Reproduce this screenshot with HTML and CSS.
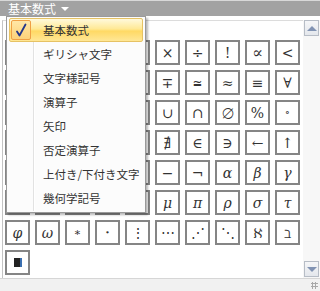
FILE: index.html
```html
<!DOCTYPE html>
<html lang="ja">
<head>
<meta charset="utf-8">
<link rel="stylesheet" href="styles.css">
</head>
<body>
<div class="panel">
  <div class="header"><span class="title">基本数式</span><span class="caret"></span></div>
  <div class="wrap">
    <div class="gallery">
      <div class="grid">
        <div class="cell"></div><div class="cell"></div><div class="cell"></div><div class="cell"></div><div class="cell"></div><div class="cell">×</div><div class="cell">÷</div><div class="cell">!</div><div class="cell lg">∝</div><div class="cell">&lt;</div>
        <div class="cell"></div><div class="cell"></div><div class="cell"></div><div class="cell"></div><div class="cell"></div><div class="cell">∓</div><div class="cell">≅</div><div class="cell">≈</div><div class="cell">≡</div><div class="cell">∀</div>
        <div class="cell"></div><div class="cell"></div><div class="cell"></div><div class="cell"></div><div class="cell"></div><div class="cell">∪</div><div class="cell">∩</div><div class="cell">∅</div><div class="cell">%</div><div class="cell sm">∘</div>
        <div class="cell"></div><div class="cell"></div><div class="cell"></div><div class="cell"></div><div class="cell"></div><div class="cell">∄</div><div class="cell">∈</div><div class="cell">∋</div><div class="cell">←</div><div class="cell">↑</div>
        <div class="cell"></div><div class="cell"></div><div class="cell"></div><div class="cell"></div><div class="cell"></div><div class="cell">−</div><div class="cell">¬</div><div class="cell it">α</div><div class="cell it">β</div><div class="cell it">γ</div>
        <div class="cell"></div><div class="cell"></div><div class="cell"></div><div class="cell"></div><div class="cell"></div><div class="cell it">μ</div><div class="cell it">π</div><div class="cell it">ρ</div><div class="cell it">σ</div><div class="cell it">τ</div>
        <div class="cell it">φ</div><div class="cell it">ω</div><div class="cell sm">∗</div><div class="cell xs">∙</div><div class="cell">⋮</div><div class="cell">⋯</div><div class="cell">⋰</div><div class="cell">⋱</div><div class="cell">ℵ</div><div class="cell">ℶ</div>
        <div class="cell"><span class="qed"></span></div>
      </div>
    </div>
    <div class="scroll">
      <div class="sbtn"><span class="up"></span></div>
      <div class="track"></div>
      <div class="sbtn"><span class="down"></span></div>
    </div>
  </div>
  <div class="footer"><span class="grip"></span></div>

  <div class="menu">
    <div class="sep"></div>
    <div class="item active">
      <span class="check"><svg width="12" height="14" viewBox="0 0 12 14"><path d="M2 8.5 L4.5 12.5 L10.5 1.5" fill="none" stroke="#23378a" stroke-width="1.8" stroke-linejoin="round" stroke-linecap="round"/></svg></span>
      <span class="label">基本数式</span>
    </div>
    <div class="item"><span class="label">ギリシャ文字</span></div>
    <div class="item"><span class="label">文字様記号</span></div>
    <div class="item"><span class="label">演算子</span></div>
    <div class="item"><span class="label">矢印</span></div>
    <div class="item"><span class="label">否定演算子</span></div>
    <div class="item"><span class="label">上付き/下付き文字</span></div>
    <div class="item"><span class="label">幾何学記号</span></div>
  </div>
</div>
</body>
</html>
```
FILE: styles.css
```css
* { box-sizing: border-box; }
html, body { margin: 0; padding: 0; }
body {
  width: 320px;
  height: 291px;
  background: #fff;
  font-family: "Noto Sans CJK JP", "Noto Sans", sans-serif;
  overflow: hidden;
}
.panel {
  position: relative;
  width: 320px;
  height: 291px;
  display: flex;
  flex-direction: column;
}
.header {
  height: 16px;
  background: #a2a2a2;
  border-top: 1px solid #d8d8d8;
  color: #fff;
  font-size: 12px;
  line-height: 14px;
  padding-left: 8px;
  display: flex;
  align-items: center;
  gap: 5px;
}
.caret {
  width: 0;
  height: 0;
  border-left: 4px solid transparent;
  border-right: 4px solid transparent;
  border-top: 4px solid #fff;
  margin-top: 1px;
}
.wrap {
  margin-top: 4px;
  display: flex;
  height: 258px;
}
.gallery {
  flex: 1;
  margin-left: 2px;
  border-top: 1px solid #dcdcdc;
  border-left: 1px solid #c4c4c4;
  padding: 19px 0 0 2px;
}
.grid {
  display: grid;
  grid-template-columns: repeat(10, 25px);
  grid-auto-rows: 25px;
  gap: 5px;
}
.cell {
  border: 2px solid #858585;
  background: #fff;
  display: flex;
  align-items: center;
  justify-content: center;
  font-family: "DejaVu Serif", "Liberation Serif", serif;
  font-size: 14px;
  color: #333;
  line-height: 1;
}
.cell.it { font-style: italic; }
.cell.sm { font-size: 11px; }
.cell.xs { font-size: 8px; }
.cell.lg { font-size: 16px; }
.qed {
  width: 8px;
  height: 9px;
  background: #222;
  border-right: 2px solid #3a6fb0;
}
.scroll {
  width: 17px;
  display: flex;
  flex-direction: column;
  background: #f7f7f7;
  padding: 0 1px 1px 1px;
}
.sbtn {
  height: 16px;
  border: 1px solid #b7bdc6;
  background: linear-gradient(#f5f6f8, #e4e7ec);
  display: flex;
  align-items: center;
  justify-content: center;
}
.track { flex: 1; }
.up {
  width: 0; height: 0;
  border-left: 5px solid transparent;
  border-right: 5px solid transparent;
  border-bottom: 5px solid #8193b3;
}
.down {
  width: 0; height: 0;
  border-left: 5px solid transparent;
  border-right: 5px solid transparent;
  border-top: 5px solid #8193b3;
}
.footer {
  height: 13px;
  border-top: 1px solid #d6d6d6;
  background: #f1f1f1;
  position: relative;
}
.grip {
  position: absolute;
  right: 2px;
  bottom: 2px;
  width: 7px;
  height: 7px;
  background-image: radial-gradient(circle, #a8a8a8 1px, transparent 1.2px);
  background-size: 3px 3px;
}
.menu {
  position: absolute;
  left: 6px;
  top: 16px;
  width: 140px;
  height: 197px;
  background: #fcfcfc;
  border: 1px solid #9a9a9a;
  box-shadow: 2px 2px 2px rgba(0,0,0,0.28);
  padding: 1px 2px;
}
.sep {
  position: absolute;
  left: 26px;
  top: 1px;
  bottom: 1px;
  width: 2px;
  border-left: 1px solid #e2e2e2;
  border-right: 1px solid #fff;
}
.item {
  position: relative;
  height: 24px;
  display: flex;
  align-items: center;
  padding-left: 33px;
  font-size: 11.5px;
  color: #333;
  border: 1px solid transparent;
  border-radius: 2px;
}
.item.active {
  background: linear-gradient(#fff9dc, #ffe995 45%, #ffd964 55%, #ffe796);
  border-color: #e6c264;
}
.check {
  position: absolute;
  left: 1px;
  top: 1px;
  width: 20px;
  height: 20px;
  border: 1px solid #f0a044;
  border-radius: 2px;
  background: linear-gradient(#ffe7a6, #fdd27a);
  display: flex;
  align-items: center;
  justify-content: center;
}
.label { white-space: nowrap; }
```
